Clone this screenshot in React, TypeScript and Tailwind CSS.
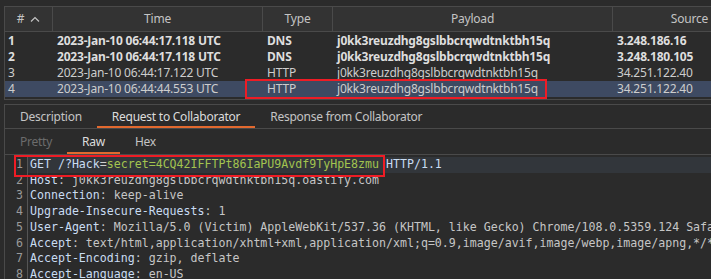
import React from "react";

const rows = [
  { n: "1", time: "2023-Jan-10 06:44:17.118 UTC", type: "DNS", payload: "j0kk3reuzdhg8gslbbcrqwdtnktbh15q", source: "3.248.186.16", bold: true },
  { n: "2", time: "2023-Jan-10 06:44:17.118 UTC", type: "DNS", payload: "j0kk3reuzdhg8gslbbcrqwdtnktbh15q", source: "3.248.180.105", bold: true },
  { n: "3", time: "2023-Jan-10 06:44:17.122 UTC", type: "HTTP", payload: "j0kk3reuzdhg8gslbbcrqwdtnktbh15q", source: "34.251.122.40", bold: false },
  { n: "4", time: "2023-Jan-10 06:44:44.553 UTC", type: "HTTP", payload: "j0kk3reuzdhg8gslbbcrqwdtnktbh15q", source: "34.251.122.40", bold: false, selected: true },
];

const headers: [string, string][] = [
  ["Time", "w-[210px]"],
  ["Type", "w-[70px]"],
  ["Payload", "w-[280px]"],
  ["Source", "w-[154px]"],
];

const lines: [string, string][] = [
  ["Host", "j0kk3reuzdhg8gslbbcrqwdtnktbh15q.oastify.com"],
  ["Connection", "keep-alive"],
  ["Upgrade-Insecure-Requests", "1"],
  ["User-Agent", "Mozilla/5.0 (Victim) AppleWebKit/537.36 (KHTML, like Gecko) Chrome/108.0.5359.124 Safari/537.36"],
  ["Accept", "text/html,application/xhtml+xml,application/xml;q=0.9,image/avif,image/webp,image/apng,*/*;q=0.8"],
  ["Accept-Encoding", "gzip, deflate"],
  ["Accept-Language", "en-US"],
];

function Tab({ label, active, dim }: { label: string; active?: boolean; dim?: boolean }) {
  return (
    <div
      className={`px-[15px] pt-[3px] h-full flex items-center border-b-2 shrink-0 ${
        active ? "border-[#e2692f] text-[#dcdcdc]" : "border-transparent"
      } ${dim ? "text-[#6c6c6c]" : active ? "" : "text-[#c4c4c4]"}`}
    >
      {label}
    </div>
  );
}

export default function App() {
  return (
    <div
      className="relative w-[711px] h-[279px] overflow-hidden bg-[#2b2b2b] text-[12px] text-[#cdcdcd] pt-[6px] pl-[4px]"
      style={{ fontFamily: '"Noto Sans", "Open Sans", sans-serif' }}
    >
      {/* request table */}
      <div className="border-l border-t border-b border-[#4a4a4a] h-[94px] w-[780px] tracking-[-0.2px]">
        <div className="flex h-[25px] bg-[#333333] border-b border-[#4a4a4a] text-[#c4c4c4]">
          <div className="w-[48px] shrink-0 flex items-center justify-center gap-[6px] border-r border-[#4a4a4a]">
            <span>#</span>
            <svg width="10" height="6" viewBox="0 0 10 6" fill="none" stroke="#c4c4c4" strokeWidth="1.2">
              <path d="M1 5.5 L5 1.5 L9 5.5" />
            </svg>
          </div>
          {headers.map(([h, w]) => (
            <div key={h} className={`${w} shrink-0 flex items-center justify-center border-r border-[#4a4a4a]`}>
              {h}
            </div>
          ))}
        </div>
        <div className="pt-[1px]">
          {rows.map((r) => (
            <div
              key={r.n}
              className={`flex h-[16px] items-center ${r.selected ? "bg-[#3e4a62]" : ""} ${
                r.bold ? "font-bold text-[#dedede]" : ""
              }`}
            >
              <div className="w-[48px] shrink-0 pl-[3px]">{r.n}</div>
              <div className="w-[210px] shrink-0 pl-[4px]">{r.time}</div>
              <div className="w-[70px] shrink-0 pl-[4px]">{r.type}</div>
              <div className="w-[280px] shrink-0 pl-[4px]">{r.payload}</div>
              <div className="w-[154px] shrink-0 pl-[4px] whitespace-nowrap">{r.source}</div>
            </div>
          ))}
        </div>
      </div>

      {/* lower pane */}
      <div className="mt-[4px] border-l border-t border-[#4a4a4a] h-[200px]">
        <div className="flex h-[24px] items-stretch border-b border-[#4a4a4a] text-[12px] tracking-[-0.25px]">
          <Tab label="Description" />
          <Tab label="Request to Collaborator" active />
          <Tab label="Response from Collaborator" />
        </div>
        <div className="flex h-[26px] items-stretch border-b border-[#4a4a4a] text-[12px] tracking-[-0.25px]">
          <Tab label="Pretty" dim />
          <Tab label="Raw" active />
          <Tab label="Hex" />
        </div>
        <div
          className="pt-[2px] text-[11.6px] leading-[15.7px] whitespace-pre"
          style={{ fontFamily: '"DejaVu Sans Mono", "Liberation Mono", monospace' }}
        >
          <div className="flex bg-[#32363b]">
            <div className="w-[23px] shrink-0 pr-[4px] text-right text-[#9a9a9a] bg-[#2b2b2b] border-r border-[#555555]">1</div>
            <div className="pl-[2px]">
              <span className="text-[#c9dcf2]">GET /?Hack</span>
              <span className="text-[#d0d0d0]">=</span>
              <span className="text-[#a3c44f]">secret=4CQ42IFFTPt86IaPU9Avdf9TyHpE8zmu</span>
              <span className="text-[#c9dcf2]"> HTTP/1.1</span>
            </div>
          </div>
          {lines.map(([k, v], i) => (
            <div key={k} className="flex">
              <div className="w-[23px] shrink-0 pr-[4px] text-right text-[#9a9a9a] border-r border-[#555555]">{i + 2}</div>
              <div className="pl-[2px]">
                <span className="text-[#c9dcf2]">{k}</span>
                <span className="text-[#c6c6c6]">: {v}</span>
              </div>
            </div>
          ))}
        </div>
      </div>

      {/* annotation boxes */}
      <div className="absolute left-[245px] top-[79px] w-[302px] h-[20px] border-2 border-[#ee1c25]" />
      <div className="absolute left-[14px] top-[155px] w-[371px] h-[22px] border-2 border-[#ee1c25]" />
    </div>
  );
}
